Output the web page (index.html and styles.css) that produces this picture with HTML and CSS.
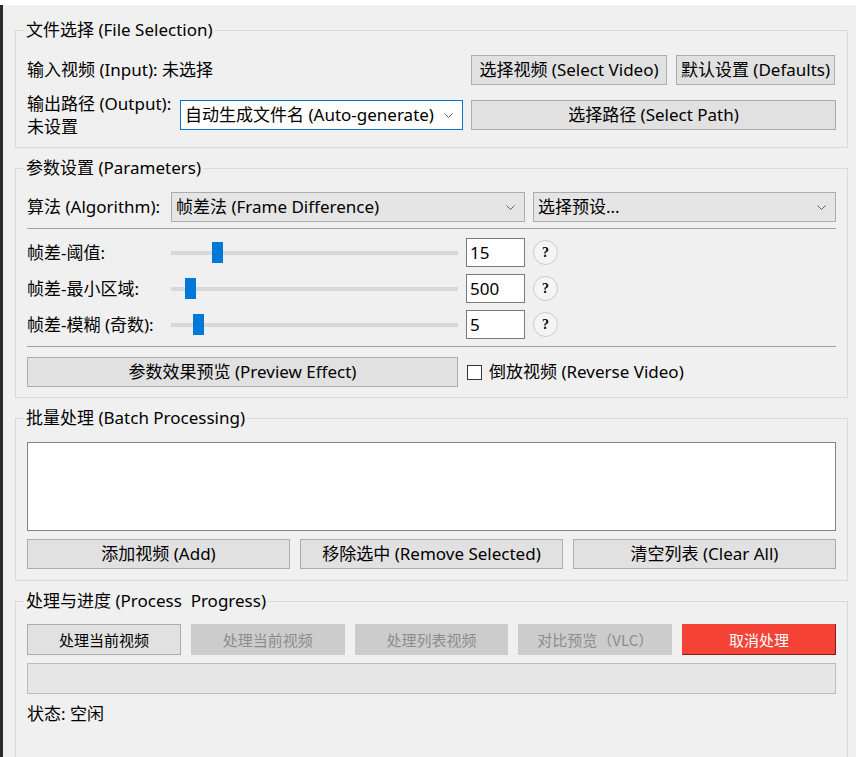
FILE: index.html
```html
<!DOCTYPE html>
<html lang="zh-CN">
  <head>
    <meta charset="UTF-8" />
    <title>视频处理</title>
    <link rel="stylesheet" href="styles.css">
  </head>
  <body>
    <div class="window">
      <fieldset class="group files">
        <legend>文件选择 (File Selection)</legend>
        <div class="file-grid">
          <div class="label wide">输入视频 (Input): 未选择</div>
          <div class="btn-pair">
            <button class="btn video-btn">选择视频 (Select Video)</button>
            <button class="btn defaults-btn">默认设置 (Defaults)</button>
          </div>

          <div class="label two-line">输出路径 (Output):<br />未设置</div>
          <div class="combo focus">
            <span>自动生成文件名 (Auto-generate)</span>
            <svg class="chev" width="9" height="5" viewBox="0 0 9 5"><polyline points="0.5,0.5 4.5,4.5 8.5,0.5" /></svg>
          </div>
          <button class="btn">选择路径 (Select Path)</button>
        </div>
      </fieldset>

      <fieldset class="group params">
        <legend>参数设置 (Parameters)</legend>
        <div class="prow algo">
          <div class="label">算法 (Algorithm):</div>
          <div class="combo algo-combo">
            <span>帧差法 (Frame Difference)</span>
            <svg class="chev" width="9" height="5" viewBox="0 0 9 5"><polyline points="0.5,0.5 4.5,4.5 8.5,0.5" /></svg>
          </div>
          <div class="combo">
            <span>选择预设...</span>
            <svg class="chev" width="9" height="5" viewBox="0 0 9 5"><polyline points="0.5,0.5 4.5,4.5 8.5,0.5" /></svg>
          </div>
        </div>

        <hr class="sep" />

        <div class="prow slider-row">
          <div class="label">帧差-阈值:</div>
          <div class="slider"><div class="thumb" style="margin-left: 41px"></div></div>
          <div class="spin">15</div>
          <div class="help">?</div>
        </div>
        <div class="prow slider-row">
          <div class="label">帧差-最小区域:</div>
          <div class="slider"><div class="thumb" style="margin-left: 14px"></div></div>
          <div class="spin">500</div>
          <div class="help">?</div>
        </div>
        <div class="prow slider-row">
          <div class="label">帧差-模糊 (奇数):</div>
          <div class="slider"><div class="thumb" style="margin-left: 22px"></div></div>
          <div class="spin">5</div>
          <div class="help">?</div>
        </div>

        <hr class="sep sep-low" />

        <div class="prow preview-row">
          <button class="btn preview-btn">参数效果预览 (Preview Effect)</button>
          <label class="check"><span class="box"></span>倒放视频 (Reverse Video)</label>
        </div>
      </fieldset>

      <fieldset class="group batch">
        <legend>批量处理 (Batch Processing)</legend>
        <div class="list"></div>
        <div class="batch-btns">
          <button class="btn">添加视频 (Add)</button>
          <button class="btn">移除选中 (Remove Selected)</button>
          <button class="btn">清空列表 (Clear All)</button>
        </div>
      </fieldset>

      <fieldset class="group process">
        <legend>处理与进度 (Process&nbsp; Progress)</legend>
        <div class="proc-btns">
          <button class="btn pbtn">处理当前视频</button>
          <button class="btn pbtn disabled">处理当前视频</button>
          <button class="btn pbtn disabled">处理列表视频</button>
          <button class="btn pbtn disabled">对比预览（VLC）</button>
          <button class="btn pbtn cancel">取消处理</button>
        </div>
        <div class="progress"></div>
        <div class="status">状态: 空闲</div>
      </fieldset>
    </div>
  </body>
</html>
```

FILE: styles.css
```css
* {
  box-sizing: border-box;
}
body {
  margin: 0;
  background: #fff;
  font-family: "Noto Sans", "Noto Sans CJK SC", sans-serif;
  font-size: 17px;
  line-height: 22px;
  color: #000;
}
.window {
  margin-top: 5px;
  height: 752px;
  overflow: hidden;
  background: #f0f0f0;
  border-left: 3px solid #2b2b2b;
  padding: 15px 8px 0 12px;
  display: flex;
  flex-direction: column;
  gap: 10px;
}
.group {
  margin: 0;
  min-width: 0;
  flex-shrink: 0;
  border: 1px solid #dadada;
  padding: 15px 11px 9px 11px;
}
.group legend {
  padding: 0 2px;
  margin-left: -3px;
  line-height: 20px;
}
.btn {
  height: 30px;
  padding: 0;
  font: inherit;
  color: #000;
  background: #e1e1e1;
  border: 1px solid #adadad;
  white-space: nowrap;
}
.combo {
  height: 30px;
  display: flex;
  align-items: center;
  justify-content: space-between;
  padding: 0 9px 0 4px;
  background: #e5e5e5;
  border: 1px solid #acacac;
  white-space: nowrap;
}
.combo.focus {
  background: #fff;
  border-color: #0078d7;
}
.chev polyline {
  fill: none;
  stroke: #606060;
  stroke-width: 1;
}

/* file selection */
.file-grid {
  display: grid;
  grid-template-columns: 145px 283px 1fr;
  column-gap: 8px;
  row-gap: 7px;
  align-items: center;
}
.wide {
  grid-column: 1 / 3;
}
.btn-pair {
  display: flex;
  gap: 9px;
}
.video-btn {
  width: 196px;
}
.defaults-btn {
  width: 159px;
}
.two-line {
  line-height: 23px;
  white-space: nowrap;
}

/* parameters */
.params {
  padding: 14px 11px 10px 11px;
}
.prow {
  display: grid;
  grid-template-columns: 136px 287px 59px 1fr;
  column-gap: 8px;
  align-items: center;
}
.prow .label {
  white-space: nowrap;
}
.algo {
  height: 30px;
}
.algo-combo {
  grid-column: 2 / 4;
}
.sep {
  height: 0;
  border: 0;
  border-top: 1px solid #a0a0a0;
  margin: 6px 0 9px;
}
.sep-low {
  margin: 7px 0 10px;
}
.slider-row {
  height: 29px;
  margin-bottom: 7px;
}
.slider-row:last-of-type {
  margin-bottom: 0;
}
.slider {
  height: 21px;
  display: flex;
  background: linear-gradient(#d8d8d8, #d8d8d8) center / 100% 4px no-repeat;
}
.thumb {
  width: 11px;
  height: 21px;
  background: #0078d7;
}
.spin {
  height: 29px;
  display: flex;
  align-items: center;
  padding-left: 3px;
  background: #fff;
  border: 1px solid #7a7a7a;
}
.help {
  width: 25px;
  height: 25px;
  border-radius: 50%;
  border: 1px solid #cacaca;
  background: #f5f5f5;
  display: flex;
  align-items: center;
  justify-content: center;
  font: bold 14px "Liberation Serif", serif;
}
.preview-row {
  height: 30px;
}
.preview-btn {
  grid-column: 1 / 3;
}
.check {
  grid-column: 3 / 5;
  display: flex;
  align-items: center;
  gap: 7px;
}
.box {
  width: 15px;
  height: 15px;
  margin-left: 1px;
  background: #fff;
  border: 1px solid #333;
}

/* batch */
.batch {
  padding: 14px 11px 11px 11px;
}
.list {
  height: 89px;
  background: #fff;
  border: 1px solid #828282;
}
.batch-btns {
  display: grid;
  grid-template-columns: repeat(3, 1fr);
  gap: 10px;
  margin-top: 8px;
}

/* process */
.process {
  padding: 13px 11px 60px 11px;
}
.proc-btns {
  display: grid;
  grid-template-columns: repeat(5, 1fr);
  gap: 10px;
}
.pbtn {
  height: 31px;
  font-family: "Noto Sans CJK SC", sans-serif;
  font-size: 15px;
}
.pbtn.disabled {
  background: #cccccc;
  border-color: #cccccc;
  color: #8c8c8c;
}
.pbtn.cancel {
  background: #f44336;
  color: #fff;
  border-color: #f44336 #7d1f18 #7d1f18 #f44336;
}
.progress {
  margin-top: 8px;
  height: 31px;
  background: #e6e6e6;
  border: 1px solid #bcbcbc;
}
.status {
  margin-top: 9px;
}
```
